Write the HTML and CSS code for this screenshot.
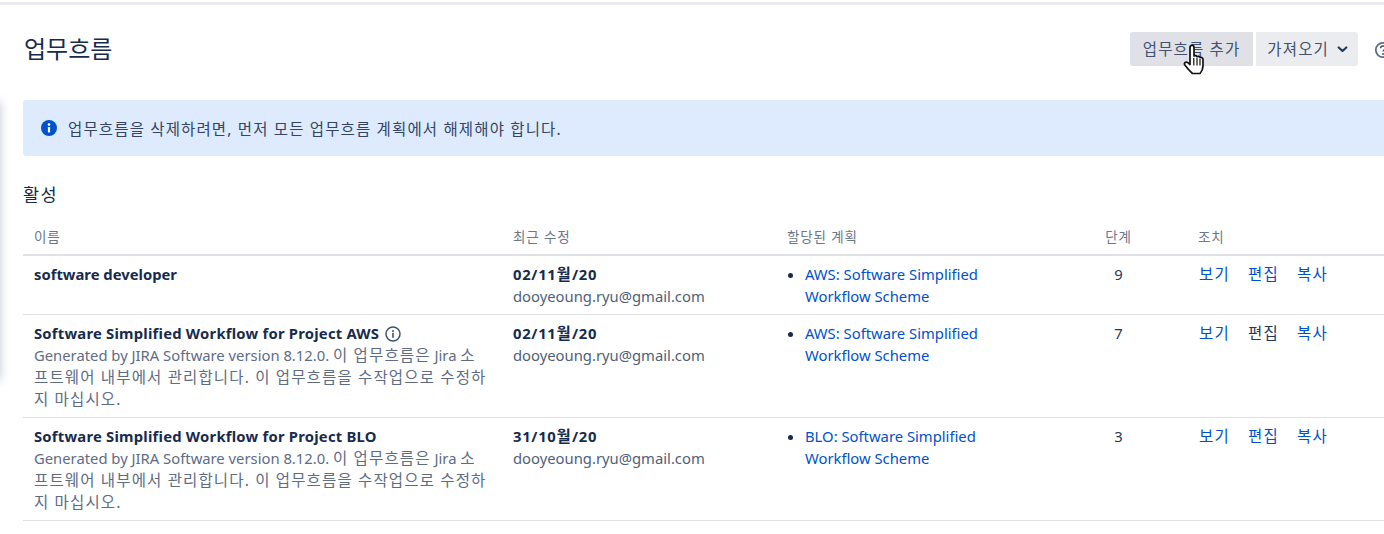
FILE: index.html
```html
<!DOCTYPE html>
<html lang="ko">
<head>
<meta charset="utf-8">
<title>업무흐름</title>
<link rel="stylesheet" href="styles.css">
</head>
<body>
<div class="side-shadow"></div>
<main class="page">
  <header class="head">
    <h1>업무흐름</h1>
    <div class="actions">
      <button class="btn hover ko">업무흐름 추가</button>
      <button class="btn"><span class="ko">가져오기</span>
        <svg class="chev" width="11" height="7" viewBox="0 0 11 7"><path d="M1.700 1.500 5.500 5l3.800-3.500" fill="none" stroke="#253858" stroke-width="2.200" stroke-linecap="round" stroke-linejoin="round"/></svg>
      </button>
      <svg class="help" width="18" height="18" viewBox="0 0 18 18"><circle cx="9" cy="9" r="7.200" fill="none" stroke="#5e6c84" stroke-width="1.800"/><path d="M6.600 7.200C6.600 5.800 7.700 5 9 5s2.400.8 2.400 2.100c0 1.800-2.400 1.700-2.400 3.500" fill="none" stroke="#42526e" stroke-width="1.500"/><circle cx="9" cy="12.900" r="1" fill="#42526e"/></svg>
    </div>
  </header>
  <div class="notice">
    <svg class="notice-icon" width="16" height="16" viewBox="0 0 16 16"><circle cx="8" cy="8" r="8" fill="#0052cc"/><circle cx="8" cy="4.600" r="1.300" fill="#fff"/><rect x="6.900" y="7" width="2.200" height="5.400" rx=".6" fill="#fff"/></svg>
    <span class="ko notice-text">업무흐름을 삭제하려면, 먼저 모든 업무흐름 계획에서 해제해야 합니다.</span>
  </div>
  <h2>활성</h2>
  <table>
    <colgroup><col class="c1"><col class="c2"><col class="c3"><col class="c4"><col class="c5"></colgroup>
    <thead><tr><th>이름</th><th>최근 수정</th><th>할당된 계획</th><th class="num">단계</th><th>조치</th></tr></thead>
    <tbody>
      <tr>
        <td><b>software developer</b></td>
        <td class="mod"><b class="date">02/11<span class="ko">월</span>/20</b><br>dooyeoung.ryu@gmail.com</td>
        <td><ul><li><a href="#">AWS: Software Simplified Workflow Scheme</a></li></ul></td>
        <td class="num">9</td>
        <td class="ops"><a href="#">보기</a><a href="#">편집</a><a href="#">복사</a></td>
      </tr>
      <tr>
        <td><b class="wf">Software Simplified Workflow for Project AWS</b>
          <svg class="info" width="16" height="16" viewBox="0 0 16 16"><circle cx="8" cy="8" r="7" fill="none" stroke="#42526e" stroke-width="1.500"/><circle cx="8" cy="4.900" r="1" fill="#42526e"/><rect x="7.200" y="6.800" width="1.600" height="5" fill="#42526e"/></svg>
          <div class="desc">Generated by JIRA Software version 8.12.0. <span class="ko">이 업무흐름은</span> Jira <span class="ko">소프트웨어 내부에서 관리합니다. 이 업무흐름을 수작업으로 수정하지 마십시오.</span></div></td>
        <td class="mod"><b class="date">02/11<span class="ko">월</span>/20</b><br>dooyeoung.ryu@gmail.com</td>
        <td><ul><li><a href="#">AWS: Software Simplified Workflow Scheme</a></li></ul></td>
        <td class="num">7</td>
        <td class="ops"><a href="#">보기</a><span>편집</span><a href="#">복사</a></td>
      </tr>
      <tr>
        <td><b class="wf">Software Simplified Workflow for Project BLO</b>
          <div class="desc">Generated by JIRA Software version 8.12.0. <span class="ko">이 업무흐름은</span> Jira <span class="ko">소프트웨어 내부에서 관리합니다. 이 업무흐름을 수작업으로 수정하지 마십시오.</span></div></td>
        <td class="mod"><b class="date">31/10<span class="ko">월</span>/20</b><br>dooyeoung.ryu@gmail.com</td>
        <td><ul><li><a href="#">BLO: Software Simplified Workflow Scheme</a></li></ul></td>
        <td class="num">3</td>
        <td class="ops"><a href="#">보기</a><a href="#">편집</a><a href="#">복사</a></td>
      </tr>
    </tbody>
  </table>
</main>
<svg class="cursor" width="22" height="31" viewBox="0 0 22 31"><path d="M7 3.500c0-2.900 4-2.900 4 0V12c1-.8 2.600-.5 3 .7 1-.7 2.700-.3 3 .9 1.300-.5 3 .3 3 1.900V22c0 3.400-1.300 5.600-3 7.500H9.500C7 27.500 3.800 23.500 1.800 21c-1.200-2 1.100-3.800 3-2.300L7 20.500z" fill="#fff" stroke="#111" stroke-width="1.700" stroke-linejoin="round"/><path d="M10.800 14v7.500M14 14v7.500M17 15v6.500" stroke="#111" stroke-width="1.200"/></svg>
</body>
</html>
```
FILE: styles.css
```css
html, body { margin: 0; padding: 0; background: #fff; }
body {
  width: 1384px; height: 534px; overflow: hidden; position: relative;
  font: 14.8px/22px "Noto Sans", "Noto Sans CJK KR", sans-serif;
  color: #172b4d;
}
.ko { font-size: 15.5px; letter-spacing: 1.15px; }
.side-shadow {
  position: absolute; left: -10px; top: 102px; width: 10px; height: 278px;
  box-shadow: 0 0 10px rgba(9,30,66,.25);
}
.page {
  box-sizing: border-box; margin-top: 2px; border-top: 3px solid #ebecf0;
  width: 1424px; padding: 0 0 0 23px;
}
.head { display: flex; justify-content: space-between; align-items: flex-start; width: 1369px; }
h1 { margin: 29px 0 0 1px; font-size: 24px; line-height: 30px; font-weight: 400; }
.actions { display: flex; align-items: center; gap: 3px; margin-top: 27px; flex: none; }
.btn {
  height: 34px; border: 0; padding: 0 10px 0 11px; font: inherit; color: #42526e;
  background: #ebecf0; border-radius: 3px; white-space: nowrap;
  display: flex; align-items: center; gap: 8px; flex: none;
}
.btn.hover { background: #dfe1e6; border-radius: 3px 0 0 3px; }
.btn.ko { font-size: 15.5px; letter-spacing: 1.15px; padding: 0 13px 0 13px; }
.btn + .btn { border-radius: 0 3px 3px 0; }
.help { margin: 1px 0 0 13px; flex: none; }
.notice {
  margin-top: 34px; height: 56px; width: 1400px; box-sizing: border-box; padding: 0 18px;
  background: #deebff; border-radius: 3px; display: flex; align-items: center; gap: 11px; color: #344563;
}
.notice-text { padding-top: 1px; }
h2 { margin: 27px 0 0; font-size: 17.5px; letter-spacing: 1.4px; line-height: 22px; font-weight: 400; }
table { border-collapse: collapse; table-layout: fixed; width: 1400px; margin-top: 10px; }
.c1 { width: 479px; } .c2 { width: 274px; } .c3 { width: 302px; } .c4 { width: 109px; } .c5 { width: 236px; }
th {
  text-align: left; font-weight: 400; color: #6b778c; font-size: 13.5px; letter-spacing: .85px; line-height: 20px;
  padding: 12px 10px 7px 11px; border-bottom: 2px solid #dfe1e6;
}
td { vertical-align: top; padding: 7px 10px 7px 11px; border-bottom: 1px solid #dfe1e6; }
th.num, td.num { text-align: center; padding-right: 39px; }
td.num { color: #253858; }
b { font-weight: 700; }
.wf { letter-spacing: .22px; }
.date { letter-spacing: .7px; }
.mod { color: #505f79; }
.mod b { color: #172b4d; }
.desc { color: #5e6c84; max-width: 454px; }
.desc .ko { line-height: 1; }
.date .ko { line-height: 1; }
.info { vertical-align: -3px; margin-left: 2px; }
ul { margin: 0; padding: 0 0 0 18px; }
li { width: 200px; }
a { color: #0052cc; text-decoration: none; }
.ops { font-size: 15.5px; letter-spacing: 1.15px; padding-left: 12px; }
.ops a, .ops span { margin-right: 18.2px; }
.ops span { color: #253858; }
.cursor { position: absolute; left: 1183px; top: 44px; }
```
